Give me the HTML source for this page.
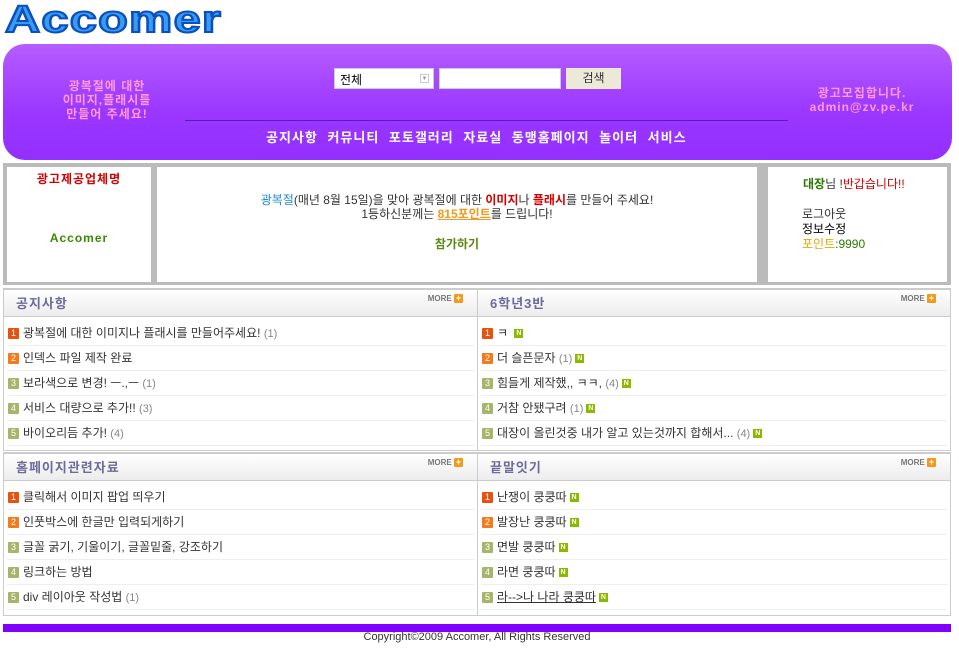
<!DOCTYPE html>
<html><head><meta charset="utf-8">
<style>
*{margin:0;padding:0;box-sizing:border-box}
body{width:959px;height:648px;background:#fff;position:relative;overflow:hidden;font-family:"Liberation Sans","Noto Sans CJK KR","NanumGothic",sans-serif;font-size:12px;color:#333}
.a{position:absolute}
.logo{left:5px;top:-3px;font-family:"Liberation Sans",sans-serif;font-weight:bold;font-size:38px;line-height:46px;color:#3a9cf0;letter-spacing:1px;-webkit-text-stroke:2px #0a4fc0;transform-origin:0 0;transform:scaleX(1.28)}
.hdr{left:3px;top:44px;width:949px;height:116px;border-radius:22px;background:linear-gradient(#b55dff,#9a36ff 60%,#9430ff)}
.pink{color:#ff9ad6;font-weight:bold;font-size:12px;text-align:center;line-height:14px;letter-spacing:1px}
.nav{color:#fff;font-weight:bold;font-size:13px;letter-spacing:1px}
.gbox{background:#bbb}
.wbox{background:#fff;position:absolute}
.brd{position:absolute;border:1px solid #ccc;border-top:2px solid #ccc}
.bh{height:27px;background:linear-gradient(#fff,#ececec);border-bottom:1px solid #ccc;position:relative}
.bh b{position:absolute;left:12px;top:3px;color:#6d6a9c;font-size:13px;letter-spacing:1px}
.more{position:absolute;right:14px;top:4px;font-size:8px;color:#777;font-weight:bold}
.more i{display:inline-block;width:9px;height:9px;background:#f39a1c;color:#fff;font-style:normal;font-size:9px;line-height:9px;text-align:center;vertical-align:middle;border-radius:1px}
ul{list-style:none;margin:4px 3px 0 3px}
li{height:25px;border-bottom:1px solid #eee;line-height:25px;font-size:12px;color:#333;white-space:nowrap;overflow:hidden}
.n{display:inline-block;width:11px;height:11px;color:#fff;font-size:9px;line-height:11px;text-align:center;margin:0 4px 0 1px;vertical-align:middle;border-radius:1px}
.n1{background:#e8520f}.n2{background:#f37b1d}.n3,.n4,.n5{background:#a6b56a}
.c{color:#888;font-size:11px}
.N{display:inline-block;width:9px;height:9px;background:#8cb800;color:#fff;font-size:7px;line-height:9px;text-align:center;vertical-align:middle;margin-left:3px;font-weight:bold}
</style></head><body>
<div class="a logo">Accomer</div>
<div class="a hdr"></div>
<div class="a pink" style="left:35px;top:79px;width:144px">광복절에 대한<br>이미지,플래시를<br>만들어 주세요!</div>
<div class="a pink" style="left:790px;top:86px;width:144px">광고모집합니다.<br>admin@zv.pe.kr</div>
<div class="a" style="left:334px;top:68px;width:100px;height:21px;background:#fff;border:1px solid #ccc;padding:2px 5px;font-size:12px;color:#000">전체<span style="position:absolute;right:4px;top:5px;width:9px;height:9px;border:1px solid #ccc;font-size:6px;color:#999;text-align:center;line-height:8px">▼</span></div>
<div class="a" style="left:439px;top:68px;width:122px;height:21px;background:#fff;border:1px solid #ccc"></div>
<div class="a" style="left:566px;top:68px;width:55px;height:21px;background:#ece9d8;text-align:center;line-height:21px;color:#333">검색</div>
<div class="a" style="left:185px;top:120px;width:603px;height:1px;background:#5a1fb0"></div>
<div class="a nav" style="left:266px;top:127px;word-spacing:5px">공지사항 커뮤니티 포토갤러리 자료실 동맹홈페이지 놀이터 서비스</div>

<div class="a gbox" style="left:3px;top:163px;width:948px;height:122px"></div>
<div class="wbox" style="left:7px;top:167px;width:144px;height:115px"></div>
<div class="wbox" style="left:157px;top:167px;width:600px;height:115px"></div>
<div class="wbox" style="left:768px;top:167px;width:179px;height:115px"></div>
<div class="a" style="left:7px;top:170px;width:144px;text-align:center;color:#d40000;font-weight:bold;font-size:12px;letter-spacing:1px">광고제공업체명</div>
<div class="a" style="left:7px;top:231px;width:144px;text-align:center;color:#3a8a00;font-weight:bold;font-size:12px;letter-spacing:1px">Accomer</div>
<div class="a" style="left:157px;top:193px;width:600px;text-align:center;font-size:12px;line-height:14px;color:#333"><span style="color:#1e88d4">광복절</span>(매년 8월 15일)을 맞아 광복절에 대한 <b style="color:#d40000">이미지</b>나 <b style="color:#d40000">플래시</b>를 만들어 주세요!<br>1등하신분께는 <b style="color:#f39a1c;text-decoration:underline">815포인트</b>를 드립니다!</div>
<div class="a" style="left:157px;top:235px;width:600px;text-align:center;color:#5a8a10;font-weight:bold">참가하기</div>
<div class="a" style="left:803px;top:177px;font-size:12px;line-height:15px"><b style="color:#2a7a00">대장</b>님 !<span style="color:#d40000">반갑습니다!!</span></div>
<div class="a" style="left:802px;top:207px;font-size:12px;line-height:15px;color:#333">로그아웃<br><span style="color:#000">정보수정</span><br><span style="color:#e8a800">포인트</span><span style="color:#2a7a00">:9990</span></div>

<div class="brd" style="left:3px;top:288px;width:475px;height:163px"><div class="bh"><b>공지사항</b><span class="more">MORE <i>+</i></span></div>
<ul><li><span class="n n1">1</span>광복절에 대한 이미지나 플래시를 만들어주세요! <span class="c">(1)</span></li><li><span class="n n2">2</span>인덱스 파일 제작 완료</li><li><span class="n n3">3</span>보라색으로 변경! ㅡ.,ㅡ <span class="c">(1)</span></li><li><span class="n n4">4</span>서비스 대량으로 추가!! <span class="c">(3)</span></li><li><span class="n n5">5</span>바이오리듬 추가! <span class="c">(4)</span></li></ul></div>
<div class="brd" style="left:477px;top:288px;width:474px;height:163px"><div class="bh"><b>6학년3반</b><span class="more">MORE <i>+</i></span></div>
<ul><li><span class="n n1">1</span>ㅋ <span class="N">N</span></li><li><span class="n n2">2</span>더 슬픈문자 <span class="c">(1)</span><span class="N">N</span></li><li><span class="n n3">3</span>힘들게 제작했,, ㅋㅋ, <span class="c">(4)</span><span class="N">N</span></li><li><span class="n n4">4</span>거참 안됐구려 <span class="c">(1)</span><span class="N">N</span></li><li><span class="n n5">5</span>대장이 올린것중 내가 알고 있는것까지 합해서... <span class="c">(4)</span><span class="N">N</span></li></ul></div>
<div class="brd" style="left:3px;top:452px;width:475px;height:164px"><div class="bh"><b>홈페이지관련자료</b><span class="more">MORE <i>+</i></span></div>
<ul><li><span class="n n1">1</span>클릭해서 이미지 팝업 띄우기</li><li><span class="n n2">2</span>인풋박스에 한글만 입력되게하기</li><li><span class="n n3">3</span>글꼴 굵기, 기울이기, 글꼴밑줄, 강조하기</li><li><span class="n n4">4</span>링크하는 방법</li><li><span class="n n5">5</span>div 레이아웃 작성법 <span class="c">(1)</span></li></ul></div>
<div class="brd" style="left:477px;top:452px;width:474px;height:164px"><div class="bh"><b>끝말잇기</b><span class="more">MORE <i>+</i></span></div>
<ul><li><span class="n n1">1</span>난쟁이 쿵쿵따<span class="N">N</span></li><li><span class="n n2">2</span>발장난 쿵쿵따<span class="N">N</span></li><li><span class="n n3">3</span>면발 쿵쿵따<span class="N">N</span></li><li><span class="n n4">4</span>라면 쿵쿵따<span class="N">N</span></li><li><span class="n n5">5</span><u>라--&gt;나 나라 쿵쿵따</u><span class="N">N</span></li></ul></div>

<div class="a" style="left:3px;top:624px;width:948px;height:8px;background:#8000ff"></div>
<div class="a" style="left:3px;top:631px;width:948px;text-align:center;font-size:11px;color:#333">Copyright©2009 Accomer, All Rights Reserved</div>
</body></html>
